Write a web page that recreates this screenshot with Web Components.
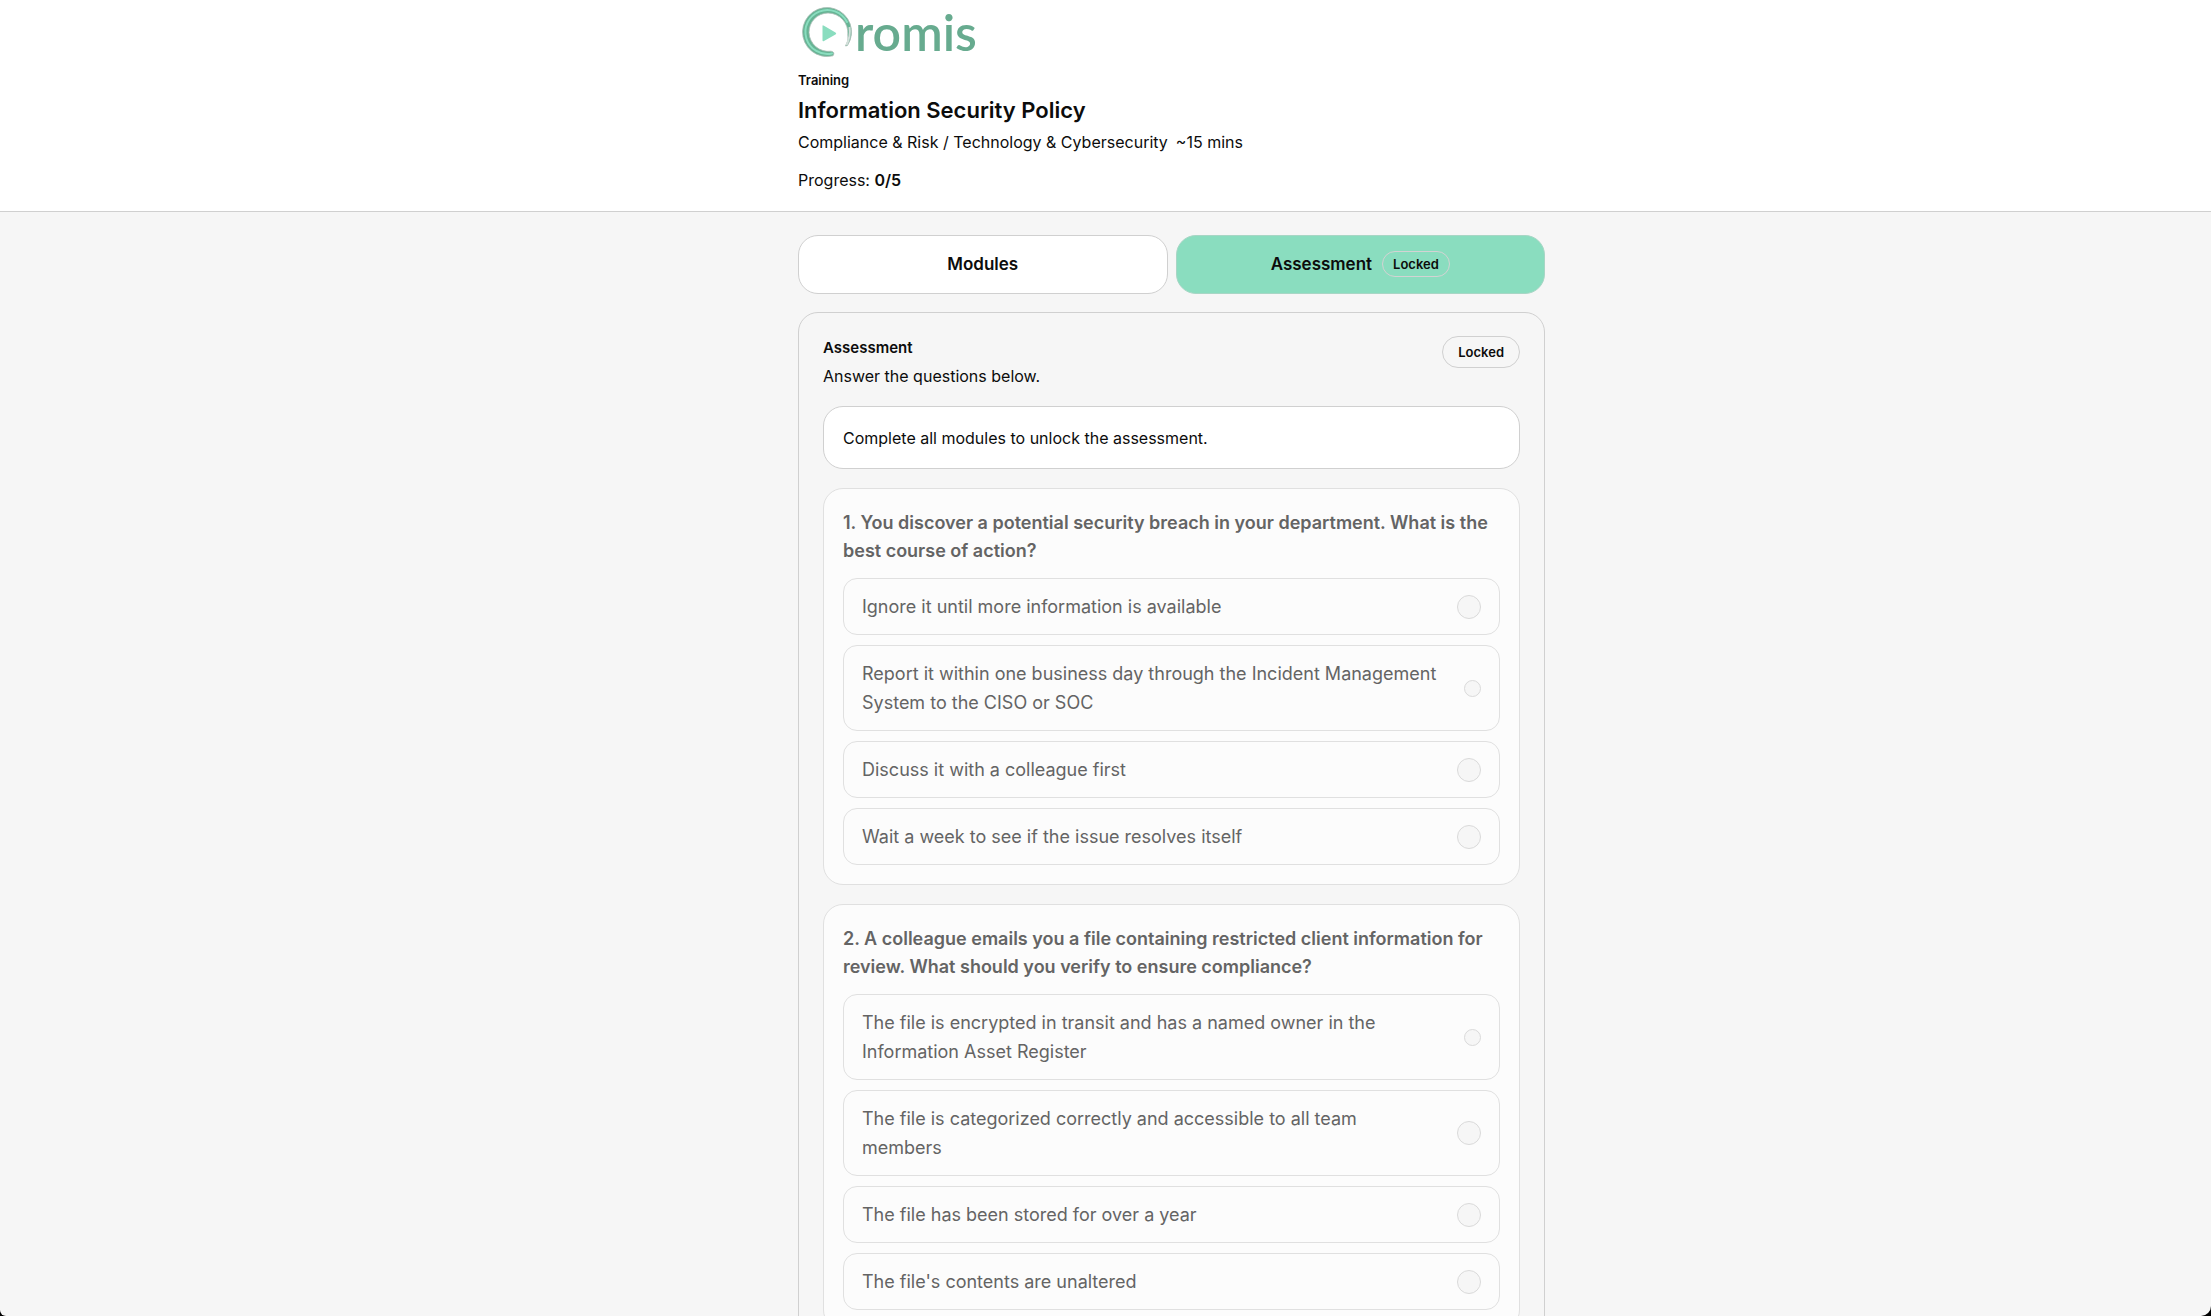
<!DOCTYPE html>
<html lang="en">
<head>
<meta charset="utf-8">
<meta name="viewport" content="width=device-width, initial-scale=1">
<title>Information Security Policy – Training</title>
<style>
  html { scrollbar-width: none; }
  body {
    margin: 0;
    background: #f6f6f6;
    color: #0c0c0c;
    font: 400 16px/24px Inter, "Open Sans", sans-serif;
    --line: #d0d0d0;
    --line-soft: #e0e0e0;
    --mint: #8addbf;
    --mint-deep: #67ab8f;
    --page-bg: #f6f6f6;
    --column: 747px;
    --rail: 132px;
  }
</style>
</head>
<body>
<training-page>
  <training-header slot="header" kind="Training" progress="0/5">
    <span slot="title">Information Security Policy</span>
    <span slot="topic">Compliance &amp; Risk / Technology &amp; Cybersecurity</span>
    <span slot="duration">~15 mins</span>
  </training-header>
  <tab-bar>
    <tab-button>Modules</tab-button>
    <tab-button active>Assessment <status-pill slot="badge" compact>Locked</status-pill></tab-button>
  </tab-bar>
  <assessment-panel>
    <span slot="title">Assessment</span>
    <span slot="hint">Answer the questions below.</span>
    <status-pill slot="status">Locked</status-pill>
    <notice-box>Complete all modules to unlock the assessment.</notice-box>
    <quiz-question>
      <span slot="prompt">1. You discover a potential security breach in your department. What is the best course of action?</span>
      <quiz-option>Ignore it until more information is available</quiz-option>
      <quiz-option small>Report it within one business day through the Incident Management System to the CISO or SOC</quiz-option>
      <quiz-option>Discuss it with a colleague first</quiz-option>
      <quiz-option>Wait a week to see if the issue resolves itself</quiz-option>
    </quiz-question>
    <quiz-question>
      <span slot="prompt">2. A colleague emails you a file containing restricted client information for review. What should you verify to ensure compliance?</span>
      <quiz-option small>The file is encrypted in transit and has a named owner in the Information Asset Register</quiz-option>
      <quiz-option>The file is categorized correctly and accessible to all team members</quiz-option>
      <quiz-option>The file has been stored for over a year</quiz-option>
      <quiz-option>The file's contents are unaltered</quiz-option>
    </quiz-question>
  </assessment-panel>
</training-page>

<script>
const define = (name, html, setup) => customElements.define(name, class extends HTMLElement {
  constructor() {
    super();
    const template = document.createElement('template');
    template.innerHTML = '<style>*{box-sizing:border-box}</style>' + html;
    this.attachShadow({ mode: 'open' }).append(template.content.cloneNode(true));
  }
  connectedCallback() { if (setup) setup(this, this.shadowRoot); }
});

define('training-page', `
  <style>
    :host { display: block; min-height: 100vh; }
    main { padding: 23px 0 24px var(--rail); }
    .column { max-width: var(--column); margin: 0 auto; display: flex; flex-direction: column; gap: 18px; }
    /* rounded lower corners of the window */
    .frame { position: fixed; inset: 0; border-radius: 0 0 10px 6px; box-shadow: 0 0 0 12px #000; pointer-events: none; }
  </style>
  <slot name="header"></slot>
  <main><div class="column"><slot></slot></div></main>
  <div class="frame"></div>
`);

define('brand-logo', `
  <style>
    :host { display: flex; align-items: center; height: 64px; }
    svg { display: block; flex: none; width: 57px; height: 64px; }
    span { font: 600 50px/64px Lato, sans-serif; color: var(--mint-deep); }
  </style>
  <svg viewBox="0 0 57 64" aria-hidden="true">
    <path d="M29.500 32m5.500 23.800A24.500 24.500 0 1 1 49.500 45.500L47.500 46Q51 41 49.800 35A20 20 0 0 0 30 13A19.200 19.200 0 0 0 11 32.500A19.500 19.500 0 0 0 33 51.200Q37.500 52 35 55.800Z" fill="#66b494" stroke="#a9bdb5" stroke-width=".8"/>
    <path d="M34 53.500A22 22 0 1 1 49 22" fill="none" stroke="#8addbf" stroke-width="2" stroke-linecap="round"/>
    <path d="M51.500 27Q53 36 48.500 45" fill="none" stroke="#d3dfda" stroke-width="2"/>
    <path d="M24.500 25.700v14.600q0 1.500 1.500.800l11.500-6.600q1.500-1 0-2l-11.500-6.800q-1.500-.8-1.500 0z" fill="#8addbf"/>
  </svg>
  <span>romis</span>
`);

define('training-header', `
  <style>
    :host { display: block; background: #fff; border-bottom: 1px solid var(--line); padding: 0 0 19px var(--rail); }
    .column { max-width: var(--column); margin: 0 auto; display: flex; flex-direction: column; gap: 6px; }
    p, h1 { margin: 0; }
    .kind { font-size: 13px; line-height: 20px; font-weight: 600; }
    h1 { font-size: 22px; line-height: 28px; font-weight: 600; }
    .meta { display: flex; gap: 8px; }
    .progress { margin-top: 8px; }
    b { font-weight: 600; }
  </style>
  <header class="column">
    <brand-logo></brand-logo>
    <p class="kind"></p>
    <h1><slot name="title"></slot></h1>
    <p class="meta"><slot name="topic"></slot><slot name="duration"></slot></p>
    <p class="progress">Progress: <b></b></p>
  </header>
`, (el, root) => {
  root.querySelector('.kind').textContent = el.getAttribute('kind');
  root.querySelector('b').textContent = el.getAttribute('progress');
});

define('tab-bar', `
  <style>
    :host { display: grid; grid-auto-flow: column; grid-auto-columns: 1fr; gap: 8px; }
  </style>
  <slot></slot>
`);

define('tab-button', `
  <style>
    :host { display: block; }
    button {
      display: flex; align-items: center; justify-content: center; gap: 10px;
      width: 100%; min-height: 59px; padding: 0 16px 2px; color: inherit;
      font: 600 17px/24px Inter, sans-serif;
      background: #fff; border: 1px solid var(--line); border-radius: 20px; cursor: pointer;
    }
    :host([active]) button { background: var(--mint); border-color: #a8d6c5; }
  </style>
  <button type="button"><span><slot></slot></span><slot name="badge"></slot></button>
`);

define('status-pill', `
  <style>
    :host {
      display: block; border: 1px solid var(--line); border-radius: 16px;
      padding: 5px 15px; font-size: 13px; line-height: 20px; font-weight: 600;
    }
    :host([compact]) { padding: 2px 10px; border-color: #d3d3d3; }
  </style>
  <slot></slot>
`);

define('assessment-panel', `
  <style>
    :host {
      display: flex; flex-direction: column; gap: 19px;
      padding: 23px 24px 24px; border: 1px solid var(--line); border-radius: 20px;
    }
    header { display: flex; justify-content: space-between; align-items: flex-start; margin-bottom: -1px; }
    .text { display: flex; flex-direction: column; gap: 4px; }
    h2, p { margin: 0; }
    h2 { font-size: 15px; line-height: 24px; font-weight: 600; }
  </style>
  <header>
    <div class="text">
      <h2><slot name="title"></slot></h2>
      <p><slot name="hint"></slot></p>
    </div>
    <slot name="status"></slot>
  </header>
  <slot></slot>
`);

define('notice-box', `
  <style>
    :host {
      display: block; padding: 19px 19px 18px; background: #fff;
      border: 1px solid var(--line); border-radius: 20px;
    }
  </style>
  <slot></slot>
`);

define('quiz-question', `
  <style>
    :host {
      display: block; padding: 20px 19px 19px; color: #646464; background: #fcfcfc;
      border: 1px solid var(--line-soft); border-radius: 20px;
    }
    h3 { margin: 0 0 13px; font-size: 18px; line-height: 28px; font-weight: 600; }
    .options { display: flex; flex-direction: column; gap: 10px; }
  </style>
  <h3 id="prompt"><slot name="prompt"></slot></h3>
  <div class="options" role="radiogroup" aria-labelledby="prompt"><slot></slot></div>
`);

define('quiz-option', `
  <style>
    :host { display: block; font-size: 18px; line-height: 29px; }
    label {
      display: flex; align-items: center; justify-content: space-between; gap: 20px;
      padding: 13px 18px; border: 1px solid var(--line-soft); border-radius: 14px;
    }
    input {
      appearance: none; flex: none; width: 24px; height: 24px; margin: 0;
      background: var(--page-bg); border: 1px solid #dadada; border-radius: 50%;
    }
    :host([small]) input { width: 17px; height: 17px; }
  </style>
  <label for="choice"><span><slot></slot></span><input type="radio" id="choice" disabled></label>
`);
</script>
</body>
</html>
